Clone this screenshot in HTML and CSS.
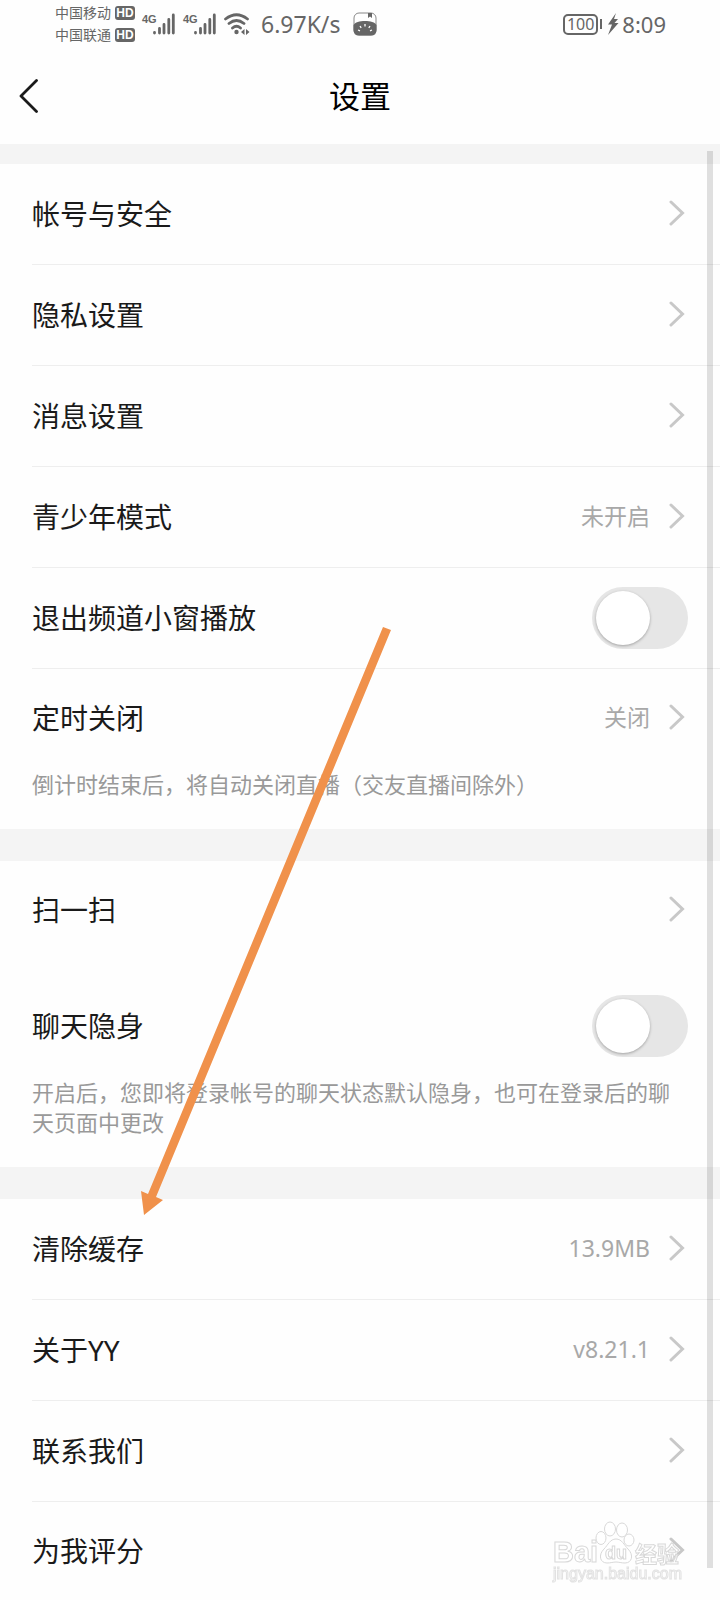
FILE: index.html
```html
<!DOCTYPE html>
<html lang="zh-CN">
<head>
<meta charset="utf-8">
<meta name="viewport" content="width=device-width, initial-scale=1">
<title>设置</title>
<link rel="stylesheet" href="styles.css">
</head>
<body>
<svg width="0" height="0" class="defs" aria-hidden="true">
  <symbol id="chevron" viewBox="0 0 16 26"><path d="M2 2 13.500 13 2 24" fill="none" stroke="#c8c8c8" stroke-width="3" stroke-linecap="round"/></symbol>
  <symbol id="signal" viewBox="0 0 22 22"><path d="M1.500 19.500v.5M6.500 15.500v4.500M11 11.500v8.500M15.800 6.500v13.500M20.300 2v18" fill="none" stroke="#666" stroke-width="2.800" stroke-linecap="round"/></symbol>
</svg>
<div class="screen">
  <div class="status">
    <div class="carriers">
      <div class="carrier">中国移动<span class="hd">HD</span></div>
      <div class="carrier">中国联通<span class="hd">HD</span></div>
    </div>
    <div class="signal"><span class="net">4G</span><svg width="22" height="22"><use href="#signal"/></svg></div>
    <div class="signal"><span class="net">4G</span><svg width="22" height="22"><use href="#signal"/></svg></div>
    <svg class="wifi" width="26" height="22" viewBox="0 0 26 22" fill="none" stroke="#666" stroke-width="2.800" stroke-linecap="round">
      <path d="M1.500 6Q12.500-2.500 23.500 6M5 10.500Q12.500 4.500 20 10.500M8.500 15Q12.500 11.500 16.500 15"/>
      <circle cx="12.500" cy="19" r="2.200" fill="#666" stroke="none"/>
      <path d="M20.500 16v6L17 19zM22 16v6l3.500-3z" fill="#666" stroke="none"/>
    </svg>
    <span class="speed">6.97K/s</span>
    <svg width="24" height="24" viewBox="0 0 24 24">
      <rect x="1" y="1" width="22" height="22" rx="5" fill="#fff" stroke="#888" stroke-width="1"/>
      <path d="M.5 13C3 7.500 21 7.500 23.500 13v5q0 5.500-5.500 5.500H6Q.5 23.500.5 18z" fill="#666"/>
      <path d="M15 1h4v5l-2-1.500L15 6z" fill="#666"/>
      <path d="M12 12v2.500M7 14l1.200 1.800M17 14l-1.200 1.800M5 18l2 .8M19 18l-2 .8" stroke="#fff" stroke-width="1.300"/>
    </svg>
    <div class="power">
      <span class="battery">100</span><span class="cap"></span>
      <svg width="12" height="24" viewBox="0 0 12 24"><path d="M9 1 1 12.500h4L1 23 11.500 11H7.500L11 7H7z" fill="#666"/></svg>
      <span class="time">8:09</span>
    </div>
  </div>

  <header class="header">
    <button class="back" aria-label="返回"><svg width="20" height="34" viewBox="0 0 20 34"><path d="M17.500 1.500 2 17l15.500 15.500" fill="none" stroke="#1a1a1a" stroke-width="2.800" stroke-linecap="round" stroke-linejoin="round"/></svg></button>
    <h1 class="title">设置</h1>
  </header>

  <main class="list">
    <section class="group">
      <button class="row"><span class="label">帐号与安全</span><svg class="chevron"><use href="#chevron"/></svg></button>
      <button class="row"><span class="label">隐私设置</span><svg class="chevron"><use href="#chevron"/></svg></button>
      <button class="row"><span class="label">消息设置</span><svg class="chevron"><use href="#chevron"/></svg></button>
      <button class="row"><span class="label">青少年模式</span><span class="value">未开启</span><svg class="chevron"><use href="#chevron"/></svg></button>
      <label class="row" for="mini"><span class="label">退出频道小窗播放</span><input class="switch" type="checkbox" role="switch" id="mini"></label>
      <button class="row plain"><span class="label">定时关闭</span><span class="value">关闭</span><svg class="chevron"><use href="#chevron"/></svg></button>
      <p class="note">倒计时结束后，将自动关闭直播（交友直播间除外）</p>
    </section>
    <section class="group">
      <button class="row plain spaced"><span class="label">扫一扫</span><svg class="chevron"><use href="#chevron"/></svg></button>
      <label class="row plain" for="hide"><span class="label">聊天隐身</span><input class="switch" type="checkbox" role="switch" id="hide"></label>
      <p class="note">开启后，您即将登录帐号的聊天状态默认隐身，也可在登录后的聊天页面中更改</p>
    </section>
    <section class="group">
      <button class="row"><span class="label">清除缓存</span><span class="value">13.9MB</span><svg class="chevron"><use href="#chevron"/></svg></button>
      <button class="row"><span class="label">关于YY</span><span class="value">v8.21.1</span><svg class="chevron"><use href="#chevron"/></svg></button>
      <button class="row"><span class="label">联系我们</span><svg class="chevron"><use href="#chevron"/></svg></button>
      <button class="row plain"><span class="label">为我评分</span><svg class="chevron"><use href="#chevron"/></svg></button>
    </section>
  </main>

  <div class="scrollbar"></div>
  <svg class="arrow" width="252" height="590" viewBox="140 626 252 590"><path d="M383 627 391 630 156 1197 163 1200 144 1215 141 1191 148 1194z" fill="#f0914b"/></svg>
  <svg class="watermark" width="136" height="64" viewBox="0 0 136 64">
    <g class="outline">
      <text x="1" y="42" class="brand">Bai</text>
      <text x="83" y="42" class="brand-cn">经验</text>
      <ellipse cx="49" cy="18" rx="5" ry="6.500"/><ellipse cx="58" cy="9" rx="5.500" ry="7"/><ellipse cx="70" cy="10" rx="5.500" ry="7"/><ellipse cx="77" cy="20" rx="5" ry="6"/>
      <path d="M64 19c6 0 8 6 12 10 6 6 4 14-3 14-4 0-6-1-9-1s-5 1-9 1c-7 0-9-8-3-14 4-4 6-10 12-10z"/>
      <text x="53" y="39" class="du">du</text>
    </g>
    <text x="1" y="59" class="site">jingyan.baidu.com</text>
  </svg>
</div>
</body>
</html>
```
FILE: styles.css
```css
* { box-sizing: border-box; }

body {
  margin: 0;
  background: #fefefe;
  color: #1a1a1a;
  font-family: "Noto Sans", "Noto Sans CJK SC", sans-serif;
}

.defs { position: absolute; }

.screen {
  position: relative;
  display: flex;
  flex-direction: column;
  height: 100vh;
  overflow: hidden;
}

.status {
  flex: none;
  display: flex;
  align-items: center;
  height: 48px;
  padding: 0 54px 0 55px;
  color: #666;
}

.carriers { margin-right: 7px; }

.carrier {
  display: flex;
  align-items: center;
  gap: 4px;
  font-size: 14px;
  line-height: 22px;
}

.hd {
  width: 20px;
  border-radius: 3px;
  background: #666;
  color: #fff;
  font: bold 12px/14px "Liberation Sans", sans-serif;
  text-align: center;
}

.signal {
  display: flex;
  margin-right: 8px;
}

.net {
  width: 11px;
  font: bold 11px/12px "Liberation Sans Narrow", "Liberation Sans", sans-serif;
}

.wifi { margin-right: 11px; }

.speed {
  margin-right: 13px;
  font-size: 23px;
}

.power {
  display: flex;
  align-items: center;
  margin-left: auto;
}

.battery {
  padding: 0 2px;
  border: 2px solid #666;
  border-radius: 5px;
  font-size: 16px;
  line-height: 17px;
}

.cap {
  width: 2px;
  height: 10px;
  margin: 0 5px 0 2px;
  background: #666;
}

.time {
  margin-left: 3px;
  font-size: 22px;
}

.header {
  flex: none;
  display: grid;
  grid-template-columns: 40px 1fr 40px;
  align-items: center;
  height: 96px;
}

.back {
  display: flex;
  padding: 0 0 0 19px;
  border: 0;
  background: none;
}

.title {
  margin: 0;
  color: #000;
  font-size: 31px;
  font-weight: 400;
  line-height: 40px;
  text-align: center;
}

.list {
  flex: 1;
  min-height: 0;
  padding-top: 20px;
  background: #f4f4f4;
  overflow-y: auto;
  scrollbar-width: none;
}

.group {
  background: #fefefe;
}

.group + .group { margin-top: 32px; }

.row {
  display: flex;
  align-items: center;
  width: 100%;
  height: 101px;
  padding: 0 32px 2px;
  border: 0;
  background: linear-gradient(#eee, #eee) 32px 100% / 100% 1px no-repeat;
  color: inherit;
  font: inherit;
  text-align: left;
}

.plain {
  height: 100px;
  background: none;
}

.spaced { margin-bottom: 16px; }

.label {
  flex: 1;
  font-size: 28px;
  line-height: 40px;
}

.value {
  padding-bottom: 2px;
  color: #a8a8a8;
  font-size: 23px;
  line-height: 40px;
}

.chevron {
  width: 16px;
  height: 26px;
  margin: 0 3px 2px 19px;
}

.switch {
  appearance: none;
  width: 96px;
  height: 62px;
  margin: 0;
  padding: 4px;
  border-radius: 31px;
  background: #e6e6e6;
}

.switch::before {
  content: "";
  display: block;
  width: 54px;
  height: 54px;
  border-radius: 50%;
  background: #fff;
  box-shadow: 0 1px 3px rgba(0, 0, 0, 0.3);
}

.switch:checked::before { margin-left: auto; }

.note {
  margin: 0;
  padding: 0 32px 30px;
  color: #999;
  font-size: 22px;
  line-height: 30px;
}

.scrollbar {
  position: absolute;
  top: 151px;
  right: 7px;
  bottom: 32px;
  width: 6px;
  background: rgba(0, 0, 0, 0.12);
}

.arrow {
  position: absolute;
  top: 626px;
  left: 140px;
  pointer-events: none;
}

.watermark {
  position: absolute;
  right: 32px;
  bottom: 16px;
  pointer-events: none;
}

.outline {
  fill: #fff;
  fill-opacity: 0.6;
  stroke: #d8d8d8;
  stroke-width: 1;
}

.brand { font: bold 29px "Liberation Sans", sans-serif; }
.brand-cn { font: bold 22px "Noto Sans CJK SC", sans-serif; }
.du { font: bold 18px "Liberation Sans", sans-serif; }

.site {
  fill: #fff;
  stroke: #e2e2e2;
  stroke-width: 1;
  font: 16px "Liberation Sans", sans-serif;
}
```
